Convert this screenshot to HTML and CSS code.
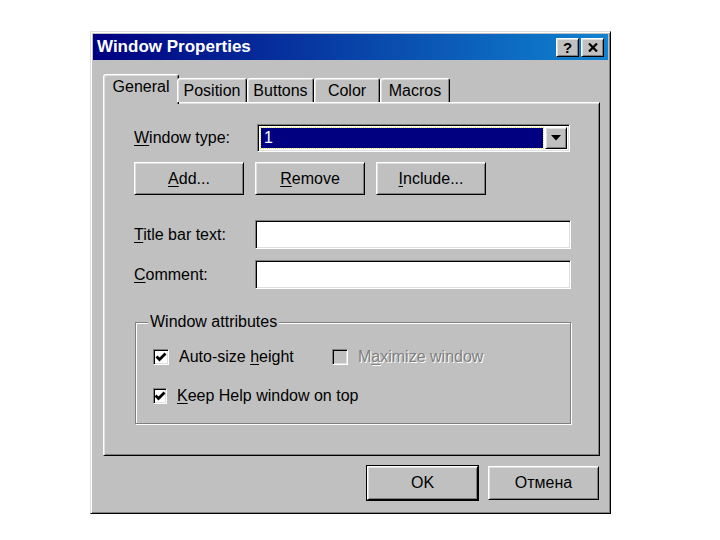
FILE: index.html
```html
<!DOCTYPE html>
<html lang="en">
<head>
  <meta charset="UTF-8">
  <meta name="viewport" content="width=device-width, initial-scale=1.0">
  <title>Window Properties</title>
  <link rel="stylesheet" href="styles.css">
</head>
<body>
  <div class="window">
    <!-- Title bar -->
    <div class="titlebar">
      <span class="title">Window Properties</span>
      <div class="tb-btns">
        <div class="btn tb-btn tb-help">?</div>
        <div class="btn tb-btn">
          <svg width="10" height="9" viewBox="0 0 10 9"><path d="M1 0.5 L9 8.5 M9 0.5 L1 8.5" stroke="#000" stroke-width="2.2"/></svg>
        </div>
      </div>
    </div>

    <div class="body">
      <!-- Tabs -->
      <div class="tabs">
        <div class="tab active" style="width:74px">General</div>
        <div class="tab" style="width:70px">Position</div>
        <div class="tab" style="width:67px">Buttons</div>
        <div class="tab" style="width:66px">Color</div>
        <div class="tab" style="width:70px">Macros</div>
      </div>

      <div class="panel">
        <div class="row">
          <span class="lbl lbl-combo"><u>W</u>indow type:</span>
          <div class="combo sunken">
            <div class="combo-val"><span>1</span></div>
            <div class="btn combo-arrow">
              <svg width="10" height="6" viewBox="0 0 10 6"><polygon points="0,0 10,0 5,5.5" fill="#000"/></svg>
            </div>
          </div>
        </div>

        <div class="btn-row">
          <div class="btn push"><span><u>A</u>dd...</span></div>
          <div class="btn push"><span><u>R</u>emove</span></div>
          <div class="btn push"><span><u>I</u>nclude...</span></div>
        </div>

        <div class="row row-field first">
          <span class="lbl"><u>T</u>itle bar text:</span>
          <div class="field sunken"></div>
        </div>
        <div class="row row-field">
          <span class="lbl"><u>C</u>omment:</span>
          <div class="field sunken"></div>
        </div>

        <fieldset class="group">
          <legend>Window attributes</legend>
          <div class="checks">
            <label class="check">
              <span class="box sunken">
                <svg width="12" height="12" viewBox="0 0 12 12"><polyline points="1.5,5.5 4.5,8.5 10.5,2.5" fill="none" stroke="#000" stroke-width="2.8"/></svg>
              </span>
              <span>Auto-size <u>h</u>eight</span>
            </label>
            <label class="check disabled">
              <span class="box sunken"></span>
              <span>M<u>a</u>ximize window</span>
            </label>
          </div>
          <div class="checks">
            <label class="check">
              <span class="box sunken">
                <svg width="12" height="12" viewBox="0 0 12 12"><polyline points="1.5,5.5 4.5,8.5 10.5,2.5" fill="none" stroke="#000" stroke-width="2.8"/></svg>
              </span>
              <span><u>K</u>eep Help window on top</span>
            </label>
          </div>
        </fieldset>
      </div>

      <div class="actions">
        <div class="btn push default">OK</div>
        <div class="btn push">Отмена</div>
      </div>
    </div>
  </div>
</body>
</html>
```

FILE: styles.css
```css
body {
  margin: 0;
  background: #fff;
  font-family: "Liberation Sans", Arial, sans-serif;
  font-size: 16px;
  color: #000;
}

u {
  text-decoration-thickness: 1px;
  text-underline-offset: 2px;
}

.window {
  box-sizing: border-box;
  width: 521px;
  height: 483px;
  margin: 31px 0 0 90px;
  padding: 1px;
  background: #c0c0c0;
  border: 1px solid;
  border-color: #dfdfdf #000 #000 #dfdfdf;
  box-shadow: inset 1px 1px #fff, inset -1px -1px #808080;
  display: flex;
  flex-direction: column;
}

/* title bar */
.titlebar {
  height: 26px;
  margin: 1px;
  padding: 0 4px 0 4px;
  background: linear-gradient(to right, #000080, #1084d0);
  display: flex;
  align-items: center;
  justify-content: space-between;
}

.title {
  color: #fff;
  font-weight: bold;
  font-size: 17px;
}

.tb-btns {
  display: flex;
  gap: 2px;
}

.btn {
  box-sizing: border-box;
  background: #c0c0c0;
  border: 1px solid;
  border-color: #fff #000 #000 #fff;
  box-shadow: inset 1px 1px #dfdfdf, inset -1px -1px #808080;
  display: flex;
  align-items: center;
  justify-content: center;
}

.tb-btn {
  width: 23px;
  height: 19px;
}

.tb-help {
  font-weight: bold;
  font-size: 15px;
}

.body {
  flex: 1;
  padding: 14px 9px 12px 11px;
  display: flex;
  flex-direction: column;
}

/* tabs */
.tabs {
  display: flex;
  align-items: flex-end;
  height: 27px;
  padding-left: 2px;
  position: relative;
  z-index: 1;
}

.tab {
  box-sizing: border-box;
  height: 24px;
  padding-top: 3px;
  text-align: center;
  background: #c0c0c0;
  border: 1px solid;
  border-bottom: none;
  border-color: #fff #000 transparent #fff;
  border-radius: 3px 3px 0 0;
  box-shadow: inset 1px 1px #dfdfdf, inset -1px 0 #808080;
}

.tab.active {
  margin: 0 -2px -2px -2px;
  padding-top: 3px;
  box-sizing: content-box;
  height: 26px;
}

/* panel */
.panel {
  box-sizing: border-box;
  height: 354px;
  padding: 21px 26px 0 30px;
  border: 1px solid;
  border-color: #fff #000 #000 #fff;
  box-shadow: inset 1px 1px #dfdfdf, inset -1px -1px #808080;
}

.sunken {
  box-sizing: border-box;
  border: 1px solid;
  border-color: #808080 #fff #fff #808080;
  box-shadow: inset 1px 1px #000, inset -1px -1px #dfdfdf;
}

.row {
  display: flex;
  align-items: center;
}

.lbl {
  width: 121px;
  flex: none;
}

.lbl-combo {
  width: 123px;
}

.combo {
  width: 313px;
  height: 28px;
  background: #fff;
  padding: 2px;
  display: flex;
  gap: 1px;
}

.combo-val {
  flex: 1;
  margin: 1px;
  background: #000080;
  color: #fff;
  outline: 1px dotted #e0e070;
  display: flex;
  align-items: center;
  padding-left: 3px;
}

.combo-arrow {
  width: 22px;
  flex: none;
}

.btn-row {
  display: flex;
  gap: 11px;
  margin-top: 10px;
}

.push {
  width: 110px;
  height: 33px;
}

.row-field {
  margin-top: 11px;
}

.row-field.first {
  margin-top: 25px;
}

.field {
  width: 316px;
  height: 29px;
  background: #fff;
}

/* group box */
.group {
  box-sizing: border-box;
  width: 436px;
  height: 111px;
  margin: 24px 0 0 1px;
  padding: 6px 0 0 17px;
  border: 1px solid #808080;
  box-shadow: inset 1px 1px #fff, 1px 1px #fff;
}

.group legend {
  padding: 0 2px;
  margin-left: -5px;
  line-height: 18px;
  background: #c0c0c0;
}

.checks {
  display: flex;
  height: 39px;
  align-items: center;
}

.check {
  display: flex;
  align-items: center;
  gap: 10px;
  width: 179px;
  white-space: nowrap;
}

.box {
  width: 16px;
  height: 16px;
  background: #fff;
  display: flex;
  align-items: center;
  justify-content: center;
}

.check.disabled {
  color: #808080;
  text-shadow: 1px 1px #fff;
}

.check.disabled .box {
  background: #c0c0c0;
}

/* bottom buttons */
.actions {
  display: flex;
  justify-content: flex-end;
  gap: 10px;
  margin-top: 10px;
  padding-right: 1px;
}

.actions .push {
  width: 111px;
  height: 34px;
}

.push.default {
  outline: 1px solid #000;
  outline-offset: 0;
  border-color: #fff #000 #000 #fff;
}
```
